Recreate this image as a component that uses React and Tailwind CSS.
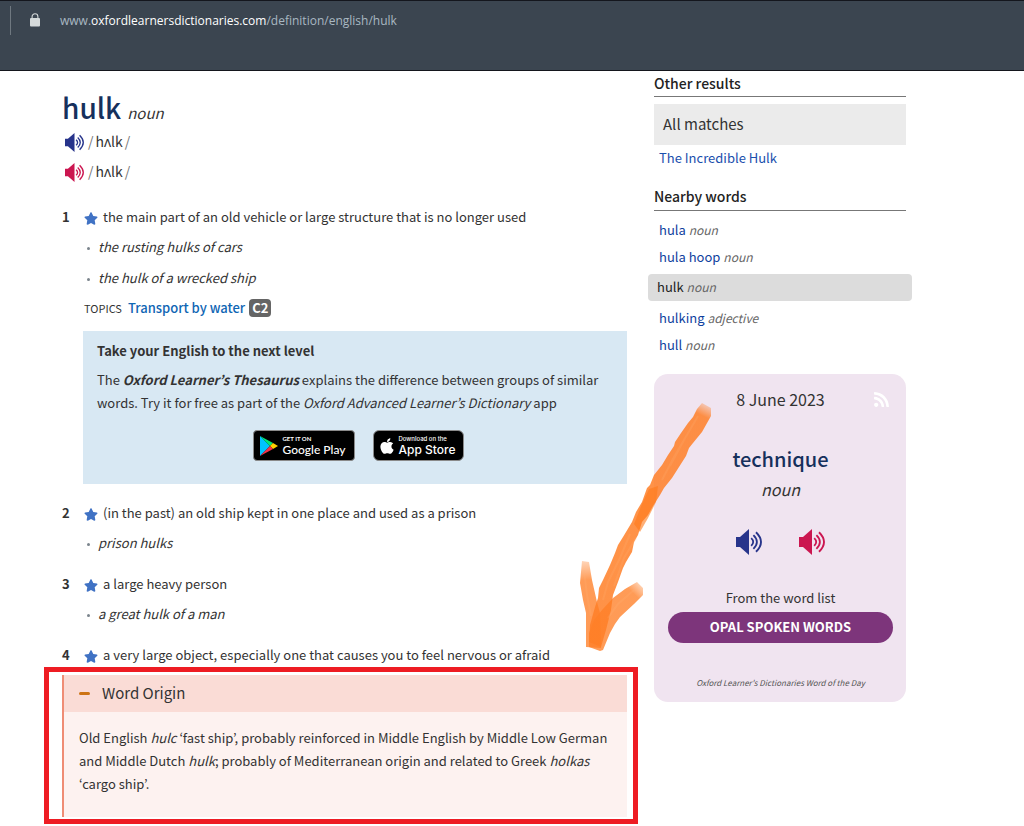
import React from 'react';
import { FaApple, FaRss, FaStar } from 'react-icons/fa';

const nearby = [
  { word: 'hula', pos: 'noun' },
  { word: 'hula hoop', pos: 'noun' },
  { word: 'hulk', pos: 'noun', current: true },
  { word: 'hulking', pos: 'adjective' },
  { word: 'hull', pos: 'noun' }
];

function Speaker({ label, className }) {
  return (
    <button type="button" aria-label={label} className={`shrink-0 ${className}`}>
      <svg viewBox="0 0 26 26" className="h-full w-full" fill="none" stroke="currentColor">
        <path d="M0 8h4L13 0v26L4 18H0z" fill="currentColor" stroke="none" />
        <path d="M15.2 9.2q4 3.8 0 7.6" strokeWidth="1.8" />
        <path d="M17.4 6.2q7 6.8 0 13.6" strokeWidth="1.8" />
        <path d="M20 3.2q10 9.8 0 19.6" strokeWidth="1.9" />
      </svg>
    </button>
  );
}

function Pronunciation({ label, className }) {
  return (
    <div className="flex h-[30px] items-center gap-1 pl-[3px] text-[14px]">
      <Speaker label={label} className={`h-[19px] w-[19px] ${className}`} />
      <span className="flex gap-[2px] pb-[2px] leading-6">
        <span className="text-[#777]">/</span>
        <span>hʌlk</span>
        <span className="text-[#777]">/</span>
      </span>
    </div>
  );
}

function AppBar() {
  return (
    <header className="h-[71px] border-t border-b border-[#14161d] bg-[#3b4550]">
      <div className="ml-[10px] mt-[5px] flex h-[29px] items-center border-l border-[#6f7880]">
        <svg viewBox="0 0 10 14" className="-mt-[2px] ml-[19px] h-[14px] w-[10px] shrink-0 text-[#d5dadb]">
          <rect y="5" width="10" height="8.4" rx="1" fill="currentColor" />
          <path d="M2.1 6V3.6a2.9 2.9 0 0 1 5.8 0V6" fill="none" stroke="currentColor" strokeWidth="1.1" />
        </svg>
        <a
          href="#url"
          className="ml-5 font-['Open_Sans',sans-serif] text-[12px] leading-5 whitespace-nowrap text-[#a9b8c2]"
        >
          www.<span className="text-white">oxfordlearnersdictionaries.com</span>/definition/english/hulk
        </a>
      </div>
    </header>
  );
}

function Sense({ number, text, examples = [] }) {
  return (
    <div>
      <div className="flex items-center leading-6">
        <span className="w-[22px] shrink-0 text-[13px] font-bold">{number}</span>
        <FaStar className="mt-[2px] mr-[5px] h-[13px] w-[14px] shrink-0 text-[#4072c4]" />
        <span>{text}</span>
      </div>
      {examples.length > 0 && (
        <ul className="mt-[6px] flex flex-col gap-[7px]">
          {examples.map(e => (
            <li key={e} className="flex items-center pl-[25px] leading-6">
              <span className="mt-[2px] mr-2 h-[3px] w-[3px] shrink-0 rounded-full bg-[#7b848c]" />
              <i>{e}</i>
            </li>
          ))}
        </ul>
      )}
    </div>
  );
}

function Promo() {
  return (
    <section className="mt-[11px] ml-[21px] h-[153px] bg-[#d8e8f3] px-[14px] pt-2">
      <h2 className="leading-[23px] font-bold">Take your English to the next level</h2>
      <p className="mt-[6px] leading-[23px]">
        The <b><i>Oxford Learner’s Thesaurus</i></b> explains the difference between groups of similar
        words. Try it for free as part of the <i>Oxford Advanced Learner’s Dictionary</i> app
      </p>
      <div className="mt-4 flex justify-center gap-[18px] pl-[6px] text-white">
        <a href="#google-play" className="flex h-[31px] w-[102px] items-center rounded border border-[#8a8a8a] bg-black pl-[6px]">
          <svg viewBox="0 0 18 20" className="h-5 w-[18px] shrink-0">
            <path d="M0 0v20L10 10z" fill="#00c3ff" />
            <path d="M0 0l13 7-3 3z" fill="#00e676" />
            <path d="M13 7l5 3-5 3-3-3z" fill="#ffce00" />
            <path d="M0 20l13-7-3-3z" fill="#f43249" />
          </svg>
          <span className="ml-[5px] flex flex-col font-[Lato,sans-serif] whitespace-nowrap">
            <span className="text-[6px] leading-[8px] font-bold">GET IT ON</span>
            <span className="text-[12px] leading-[14px] font-medium">Google Play</span>
          </span>
        </a>
        <a href="#app-store" className="flex h-[31px] w-[91px] items-center rounded-md border border-[#8a8a8a] bg-black pl-[6px]">
          <FaApple className="h-[18px] w-[14px] shrink-0" />
          <span className="ml-[5px] flex flex-col font-[Inter,sans-serif] whitespace-nowrap">
            <span className="text-[6px] leading-[8px] font-medium">Download on the</span>
            <span className="text-[12px] leading-[13px] font-medium">App Store</span>
          </span>
        </a>
      </div>
    </section>
  );
}

function WordOrigin() {
  return (
    <div className="-mr-[11px] -ml-[18px] border-5 border-[#ee1c23] pt-[3px] pr-[6px] pb-[2px] pl-[13px]">
      <section className="border-l-2 border-[#ef8d75] bg-[#fdf2f0]">
        <h2 className="bg-[#fadcd6]">
          <button type="button" className="flex h-[37px] w-full items-center pl-[15px] text-[15px]">
            <span className="mr-3 h-[3px] w-[11px] rounded-full bg-[#cd7414]" />
            Word Origin
          </button>
        </h2>
        <p className="px-[15px] pt-[14px] pb-[22px] leading-[23px]">
          Old English <i>hulc</i> ‘fast ship’, probably reinforced in Middle English by Middle Low German
          and Middle Dutch <i>hulk</i>; probably of Mediterranean origin and related to Greek <i>holkas</i>{' '}
          ‘cargo ship’.
        </p>
      </section>
    </div>
  );
}

function WordOfTheDay() {
  return (
    <section className="relative mt-4 flex h-[328px] flex-col rounded-[14px] bg-[#f0e4f0] pt-[13px] pr-[13px] pl-[14px] text-center">
      <a href="#rss" aria-label="RSS" className="absolute top-[17px] right-4 text-white">
        <FaRss className="h-[17px] w-[17px]" />
      </a>
      <p className="text-[16px] leading-6">8 June 2023</p>
      <h3 className="mt-9 text-[20px] leading-6 font-medium text-[#16305c]">technique</h3>
      <p className="mt-[6px] text-[16px] leading-6 italic">noun</p>
      <div className="mt-7 flex justify-center gap-[37px]">
        <Speaker label="British pronunciation" className="h-[26px] w-[26px] text-[#27348b]" />
        <Speaker label="American pronunciation" className="h-[26px] w-[26px] text-[#cb1650]" />
      </div>
      <p className="mt-[31px] leading-6">From the word list</p>
      <a href="#opal" className="mt-[2px] rounded-full bg-[#7d357b] pb-px leading-[30px] font-bold text-white">
        OPAL SPOKEN WORDS
      </a>
      <p className="mt-7 text-[8px] leading-6 text-[#555] italic">Oxford Learner's Dictionaries Word of the Day</p>
    </section>
  );
}

function Sidebar() {
  return (
    <aside className="w-[252px] shrink-0">
      <h2 className="border-b border-[#777] text-[14px] leading-[25px] font-medium text-[#222]">Other results</h2>
      <div className="mt-[7px] bg-[#ebebeb] px-[9px] pb-px text-[15px] leading-10">All matches</div>
      <a href="#incredible" className="block pl-[5px] leading-[25px] text-[#1a4fad]">The Incredible Hulk</a>
      <h2 className="mt-[14px] border-b border-[#777] pb-px text-[14px] leading-[25px] font-medium text-[#222]">Nearby words</h2>
      <ul className="mt-[5px] leading-[27px]">
        {nearby.map(n => (
          <li
            key={n.word}
            className={n.current ? '-mx-[6px] mt-1 mb-[3px] rounded bg-[#dcdcdc] pb-[2px] pl-[9px] leading-[25px]' : 'pl-[5px]'}
          >
            <a href={`#${n.word}`} className={n.current ? 'text-[#222]' : 'text-[#0f3f9e]'}>
              {n.word} <i className="text-[12px] text-[#666]">{n.pos}</i>
            </a>
          </li>
        ))}
      </ul>
      <WordOfTheDay />
    </aside>
  );
}

function Arrow() {
  return (
    <svg viewBox="0 0 150 270" className="pointer-events-none absolute top-[319px] left-[570px] h-[270px] w-[150px]">
      <defs>
        <linearGradient id="shaft" gradientUnits="userSpaceOnUse" x1="137" y1="13" x2="131" y2="25">
          <stop offset="0" stopColor="#ff7f27" stopOpacity="0.2" />
          <stop offset="1" stopColor="#ff7f27" stopOpacity="0.85" />
        </linearGradient>
        <linearGradient id="left" gradientUnits="userSpaceOnUse" x1="15" y1="170" x2="16" y2="190">
          <stop offset="0" stopColor="#ff7f27" stopOpacity="0.3" />
          <stop offset="1" stopColor="#ff7f27" stopOpacity="0.78" />
        </linearGradient>
        <linearGradient id="right" gradientUnits="userSpaceOnUse" x1="73" y1="195" x2="64" y2="204">
          <stop offset="0" stopColor="#ff7f27" stopOpacity="0.3" />
          <stop offset="1" stopColor="#ff7f27" stopOpacity="0.78" />
        </linearGradient>
      </defs>
      <path
        d="M132 13L127 19 123 27 118 33 111 43 105 52 104 56 98 65 92 75 84 85 80 95 77 98 72 112 66 122 62 132 53 147 48 155 45 163 40 175 33 190 29 198 28 208 25 217 20 235 19 252 31 257 36 240 41 220 43 205 48 192 53 178 56 172 62 162 64 152 68 145 72 132 78 125 83 116 90 105 94 98 102 88 109 77 116 66 119 58 123 53 132 42 141 26 141 18z"
        fill="url(#shaft)"
      />
      <path d="M12 171L19 172 22 190 27 212 30 223 31 258 16 257 16 223 13 210 10 193z" fill="url(#left)" />
      <path d="M67 192L73 198 73 205 64 214 50 227 45 234 40 243 33 260 30 261 19 257 19 243 24 230 32 220 43 208 55 199z" fill="url(#right)" />
      <path d="M79 99L88 96 86 112 78 128 70 142 64 134 72 114z" fill="#ff7a1a" fillOpacity="0.6" />
      <path
        d="M128 26L114 50 100 76M121 38L104 67 92 90M60 144L50 168 38 192 33 210M66 148L54 168 44 196M64 200L48 214 38 228M14 180L17 205 21 226"
        fill="none"
        stroke="#ffb27a"
        strokeOpacity="0.2"
        strokeWidth="2"
      />
    </svg>
  );
}

export default function App() {
  return (
    <div className="bg-white font-['Noto_Sans_CJK_KR','Noto_Sans',sans-serif] text-[13px] text-[#333]">
      <AppBar />
      <div className="relative flex gap-[27px] pr-[118px] pl-[62px]">
        <main className="min-w-0 flex-1 pt-4">
          <h1 className="flex h-10 items-baseline gap-[6px] leading-10">
            <span className="text-[28px] font-medium text-[#16305c]">hulk</span>
            <i className="text-[15px]">noun</i>
          </h1>
          <Pronunciation label="British pronunciation" className="text-[#27348b]" />
          <Pronunciation label="American pronunciation" className="text-[#cb1650]" />
          <div className="mt-[18px]">
            <Sense
              number="1"
              text="the main part of an old vehicle or large structure that is no longer used"
              examples={['the rusting hulks of cars', 'the hulk of a wrecked ship']}
            />
            <div className="mt-[6px] flex items-center pl-[22px] leading-6">
              <span className="text-[11px]">TOPICS</span>
              <a href="#topic" className="ml-[6px] font-medium text-[#0f66b4]">Transport by water</a>
              <span className="ml-1 rounded bg-[#656565] px-[3px] leading-[18px] font-bold text-white">C2</span>
            </div>
          </div>
          <Promo />
          <div className="mt-[17px] flex flex-col gap-[17px]">
            <Sense number="2" text="(in the past) an old ship kept in one place and used as a prison" examples={['prison hulks']} />
            <Sense number="3" text="a large heavy person" examples={['a great hulk of a man']} />
            <Sense number="4" text="a very large object, especially one that causes you to feel nervous or afraid" />
          </div>
          <WordOrigin />
        </main>
        <Sidebar />
        <Arrow />
      </div>
    </div>
  );
}
